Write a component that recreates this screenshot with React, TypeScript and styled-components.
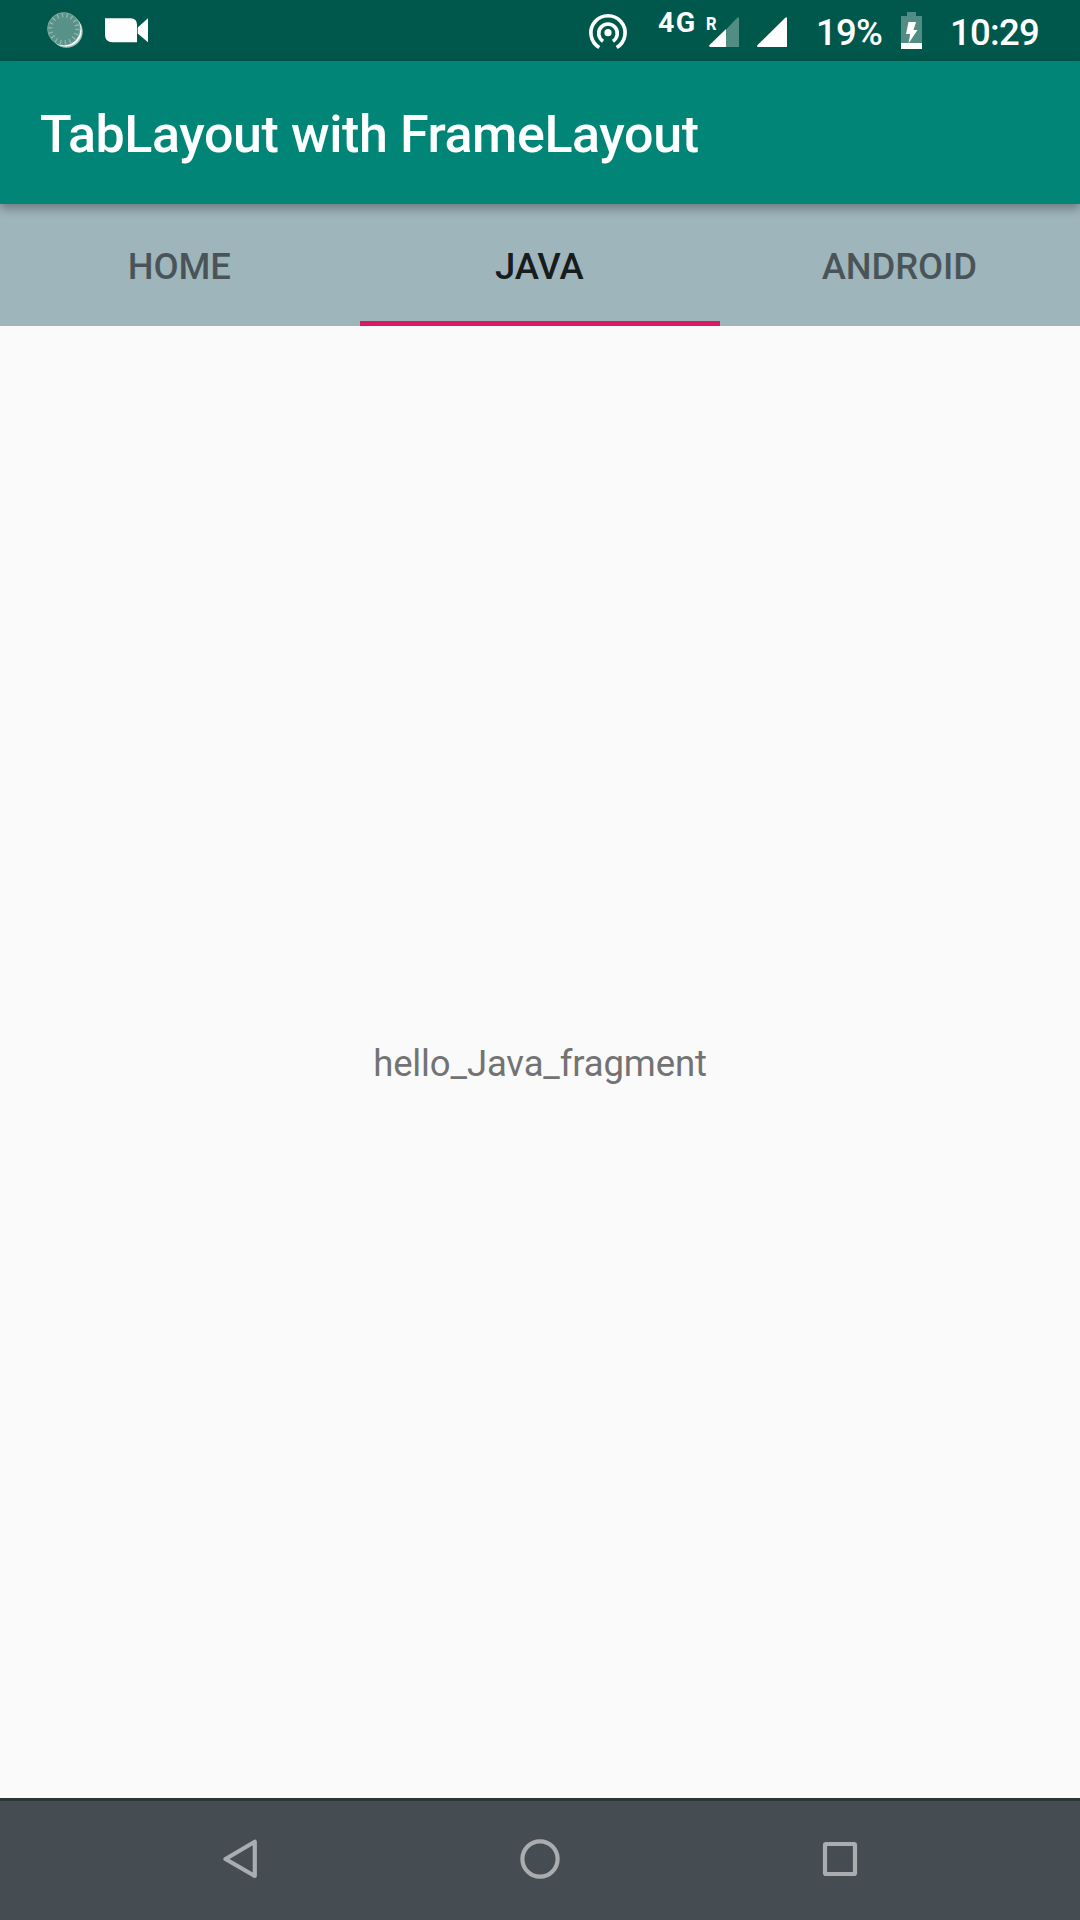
import React from 'react';
import styled, { createGlobalStyle } from 'styled-components';

const GlobalStyle = createGlobalStyle`
  * { box-sizing: border-box; }
  body { margin: 0; background: #fafafa; }
`;

const Screen = styled.div`
  display: flex;
  flex-direction: column;
  width: 1080px;
  height: 1920px;
  overflow: hidden;
  background: #fafafa;
  font-family: Roboto, sans-serif;
`;

const StatusBar = styled.header`
  display: flex;
  justify-content: space-between;
  flex: none;
  height: 61px;
  padding: 0 36px 0 45px;
  background: #00574b;
  color: #fff;
`;

const StatusGroup = styled.div`
  display: flex;
  align-items: flex-start;
`;

const Glyph = styled.svg<{ $before?: number }>`
  display: block;
  flex: none;
  margin-left: ${({ $before = 0 }) => $before}px;
`;

const StatusText = styled.span<{ $width: number; $before: number }>`
  width: ${({ $width }) => $width}px;
  margin-left: ${({ $before }) => $before}px;
  padding-top: 11px;
  font-size: 36.5px;
  font-weight: 500;
  line-height: 44px;
  letter-spacing: -0.7px;
  white-space: nowrap;
`;

const NetworkType = styled.span`
  width: 50px;
  margin-left: 29px;
  padding-top: 7px;
  font-size: 28.5px;
  font-weight: 700;
  line-height: 32px;
  letter-spacing: 1.4px;
`;

const Signal = styled.div<{ $before?: number }>`
  position: relative;
  margin-left: ${({ $before = 0 }) => $before}px;
`;

const Roaming = styled.span`
  position: absolute;
  top: 12px;
  left: -2px;
  font-size: 19px;
  font-weight: 700;
  line-height: 23px;
  transform: scaleX(0.87);
  transform-origin: left;
`;

const AppBar = styled.div`
  position: relative;
  z-index: 1;
  display: flex;
  align-items: center;
  flex: none;
  height: 143px;
  padding: 4px 0 0 40px;
  background: #008577;
  box-shadow: 0 4px 10px rgba(0, 0, 0, 0.35);
`;

const Title = styled.h1`
  margin: 0;
  color: #fff;
  font-size: 52px;
  font-weight: 500;
  line-height: 62px;
  letter-spacing: -0.41px;
  white-space: nowrap;
`;

const Tabs = styled.nav`
  display: grid;
  grid-template-columns: repeat(3, 1fr);
  flex: none;
  height: 122px;
  background: #9eb5bc;
`;

const Tab = styled.button<{ $active?: boolean }>`
  display: flex;
  align-items: center;
  justify-content: center;
  padding: 9px 1.5px 0 0;
  border: 0;
  border-bottom: 5px solid ${({ $active }) => ($active ? '#d81b60' : 'transparent')};
  background: none;
  color: ${({ $active }) => ($active ? 'rgba(0,0,0,.87)' : 'rgba(0,0,0,.54)')};
  font: 500 36.5px/44px Roboto, sans-serif;
  letter-spacing: -0.15px;
`;

const Content = styled.main`
  display: flex;
  align-items: center;
  justify-content: center;
  flex: 1;
  padding-top: 3px;
  color: #737373;
  font-size: 36.5px;
  line-height: 44px;
  letter-spacing: -0.13px;
`;

const NavigationBar = styled.footer`
  display: flex;
  align-items: center;
  justify-content: center;
  gap: 240px;
  flex: none;
  height: 122px;
  padding-bottom: 3px;
  border-top: 3px solid #2d3434;
  background: #454d53;
`;

const NavButton = styled.button`
  display: flex;
  width: 60px;
  height: 60px;
  padding: 0;
  border: 0;
  background: none;
  color: #a9adaf;
`;

function Spinner() {
  return (
    <Glyph width="40" height="61" viewBox="45 0 40 61">
      <circle cx="66.5" cy="31.5" r="16.2" fill="#a5c4bf" />
      <circle cx="65.6" cy="30.6" r="15.9" fill="#fff" />
      <circle cx="63.8" cy="28.8" r="16.5" fill="#589187" />
      <circle cx="63.8" cy="28.8" r="13.5" fill="none" stroke="#91b7b0" strokeWidth="4.4" strokeDasharray="1.3 3.41" />
      <circle cx="63.8" cy="28.8" r="16.2" fill="none" stroke="#80aaa2" strokeWidth=".7" />
    </Glyph>
  );
}

function Camera() {
  return (
    <Glyph $before={19} width="46" height="61" viewBox="104 0 46 61">
      <path d="M105 18.3H130.5Q137 18.3 137 25V42.2H112.5Q105 42.2 105 34.7Z" fill="#fff" />
      <path d="M137.7 27.5L148 18.3V42.2L137.7 33.5Z" fill="#fff" />
    </Glyph>
  );
}

function Hotspot() {
  return (
    <Glyph width="42" height="61" viewBox="587 0 42 61">
      <circle cx="608" cy="32.7" r="3.6" fill="#fff" />
      <g fill="none" stroke="#fff" strokeWidth="3.6">
        <path d="M603.1 41.2A9.3 9.3 0 1 1 612.9 41.2" />
        <path d="M599.3 47.5A17.1 17.1 0 1 1 616.7 47.5" />
      </g>
    </Glyph>
  );
}

function App() {
  return (
    <>
      <GlobalStyle />
      <Screen>
        <StatusBar>
          <StatusGroup>
            <Spinner />
            <Camera />
          </StatusGroup>
          <StatusGroup>
            <Hotspot />
            <NetworkType>4G</NetworkType>
            <Signal>
              <Glyph width="32" height="61" viewBox="708 0 32 61">
                <path d="M726 29.5L737.3 17.7Q739 16.3 739 18.5V47H726Z" fill="#518d83" />
                <path d="M726 29L709.5 45.1Q708.4 47 710.6 47H726Z" fill="#fff" />
              </Glyph>
              <Roaming>R</Roaming>
            </Signal>
            <Signal $before={16}>
              <Glyph width="32" height="61" viewBox="756 0 32 61">
                <path d="M785.3 17.7Q787 16.3 787 18.5V47H758.6Q756.4 47 757.5 45.1Z" fill="#fff" />
              </Glyph>
            </Signal>
            <StatusText $before={28} $width={66}>19%</StatusText>
            <Glyph $before={19} width="21" height="61" viewBox="901 0 21 61">
              <path d="M907 12H916V16H922V43H901V16H907Z" fill="#518d83" />
              <path d="M901 43H922V49H901Z" fill="#fff" />
              <path d="M908.5 22H916L913.5 30H917.5L908.5 43.5L910.2 34H906Z" fill="#fff" />
            </Glyph>
            <StatusText $before={28} $width={94}>10:29</StatusText>
          </StatusGroup>
        </StatusBar>
        <AppBar>
          <Title>TabLayout with FrameLayout</Title>
        </AppBar>
        <Tabs>
          <Tab>HOME</Tab>
          <Tab $active>JAVA</Tab>
          <Tab>ANDROID</Tab>
        </Tabs>
        <Content>hello_Java_fragment</Content>
        <NavigationBar>
          <NavButton aria-label="Back">
            <Glyph width="60" height="60" viewBox="210 1829 60 60">
              <path d="M254.8 1841.7V1876L225.5 1859Z" fill="none" stroke="currentColor" strokeWidth="4.2" strokeLinejoin="round" />
            </Glyph>
          </NavButton>
          <NavButton aria-label="Home">
            <Glyph width="60" height="60" viewBox="510 1829 60 60">
              <circle cx="540" cy="1859" r="17.6" fill="none" stroke="currentColor" strokeWidth="4.2" />
            </Glyph>
          </NavButton>
          <NavButton aria-label="Recent apps">
            <Glyph width="60" height="60" viewBox="810 1829 60 60">
              <rect x="825" y="1844" width="30" height="30" rx="1" fill="none" stroke="currentColor" strokeWidth="4.2" />
            </Glyph>
          </NavButton>
        </NavigationBar>
      </Screen>
    </>
  );
}

export default App;
